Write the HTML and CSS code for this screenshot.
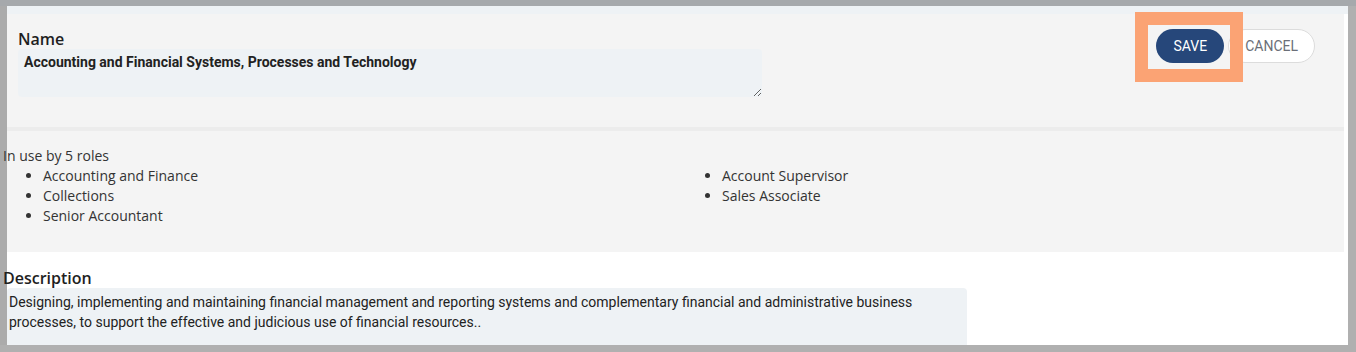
FILE: index.html
```html
<!DOCTYPE html>
<html>
<head>
  <title>Edit Skill</title>
  <link rel="stylesheet" href="styles.css">
</head>
<body>
  <div class="topbar"></div>

  <div class="frame">
    <div class="strip"></div>

    <!-- NAME + ACTIONS -->
    <section class="header">
      <div class="field">
        <label class="label" for="skillName">Name</label>
        <textarea id="skillName" class="name-input">Accounting and Financial Systems, Processes and Technology</textarea>
      </div>
      <div class="actions">
        <span class="highlight">
          <button class="save-button">SAVE</button>
        </span>
        <button class="cancel-button">CANCEL</button>
      </div>
    </section>

    <!-- ROLES USING THIS SKILL -->
    <section class="roles">
      <div class="roles-title">In use by 5 roles</div>
      <ul class="roles-list">
        <li>Accounting and Finance</li>
        <li>Collections</li>
        <li>Senior Accountant</li>
        <li>Account Supervisor</li>
        <li>Sales Associate</li>
      </ul>
    </section>

    <!-- DESCRIPTION -->
    <section class="description">
      <label class="label" for="skillDescription">Description</label>
      <textarea id="skillDescription" class="description-input">Designing, implementing and maintaining financial management and reporting systems and complementary financial and administrative business processes, to support the effective and judicious use of financial resources..</textarea>
    </section>
  </div>
</body>
</html>
```

FILE: styles.css
```css
body {
  margin: 0;
  background: #b0b0b0;
  font-family: "Open Sans", Arial, sans-serif;
  overflow: hidden;
}
.topbar { height: 6px; background: #a6a9ac; }

/* left gray edge is part of the frame so the shifted texts stay inside it */
.frame {
  width: 1348px;
  height: 339px;
  box-sizing: border-box;
  padding-left: 7px;
  background: linear-gradient(to right, #ababab 7px, #fff 7px);
  overflow: hidden;
}
.strip { height: 8px; background: #eef2f5; }

.label {
  display: block;
  font-size: 16px;
  font-weight: 600;
  line-height: 20px;
  color: #1f1f1f;
}

/* Name row */
.header {
  display: flex;
  justify-content: space-between;
  width: 1337px;
  height: 117px;
  box-sizing: border-box;
  padding: 15px 29px 0 11px;
  background: #f4f4f4;
  border-bottom: 4px solid #ececec;
}
.name-input {
  display: block;
  width: 744px;
  height: 48px;
  box-sizing: border-box;
  padding: 3px 6px;
  border: none;
  border-radius: 4px;
  background: #eef2f5;
  font-family: Roboto, Arial, sans-serif;
  font-size: 14px;
  font-weight: 700;
  line-height: 20px;
  color: #222;
  resize: both;
}

.actions {
  display: flex;
  align-items: flex-start;
  gap: 4px;
}
.save-button, .cancel-button {
  height: 34px;
  padding: 0 17px;
  border-radius: 17px;
  font-family: Roboto, Arial, sans-serif;
  font-size: 14px;
  cursor: pointer;
}
.save-button {
  background: #26477a;
  color: #fff;
  border: none;
}
.cancel-button {
  padding: 0 16px;
  background: #fff;
  color: #6b6f78;
  border: 1px solid #dcdcdc;
}
.highlight { position: relative; display: block; }
.highlight::after {
  content: "";
  position: absolute;
  left: -21px;
  top: -17px;
  width: 108px;
  height: 70px;
  box-sizing: border-box;
  border: 13px solid #fba374;
}

/* Roles list */
.roles {
  width: 1337px;
  height: 121px;
  box-sizing: border-box;
  padding-top: 15px;
  background: #f4f4f4;
  font-size: 14px;
  line-height: 20px;
  color: #333;
}
.roles-title { margin-left: -4px; }
.roles-list {
  margin: 0 0 0 -4px;
  padding: 0;
  width: 1342px;
  column-count: 2;
  column-gap: 16px;
}
.roles-list li { margin-left: 40px; }

/* Description */
.description {
  padding-top: 16px;
}
.description .label { margin-left: -4px; }
.description-input {
  display: block;
  width: 960px;
  height: 70px;
  box-sizing: border-box;
  padding: 4px 2px;
  border: none;
  border-radius: 4px;
  background: #eef2f5;
  font-family: Roboto, Arial, sans-serif;
  font-size: 14px;
  line-height: 20px;
  color: #222;
}
```
